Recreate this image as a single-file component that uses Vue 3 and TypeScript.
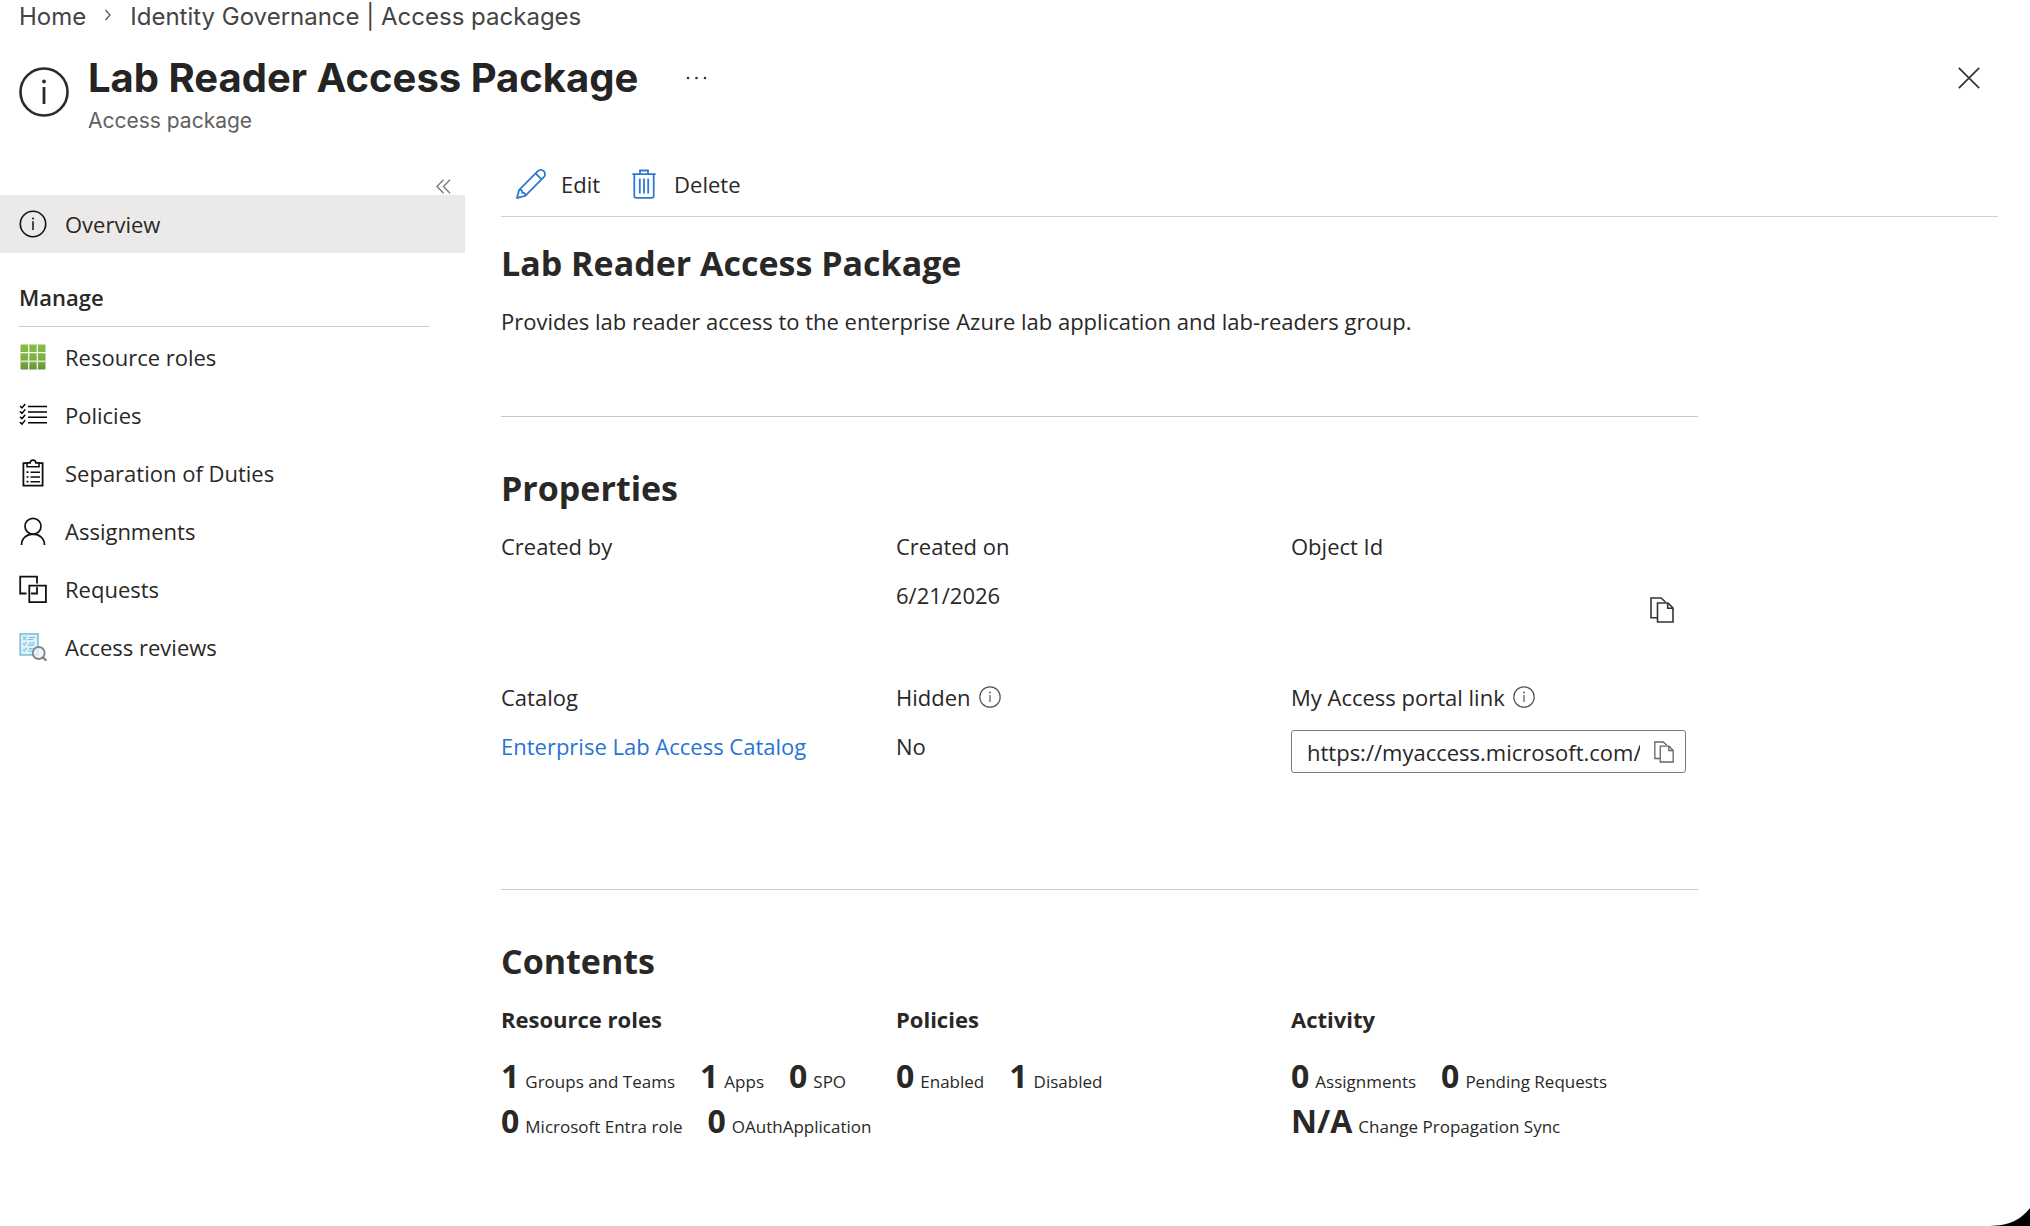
<script setup lang="ts">
interface NavItem {
  id: string
  label: string
}

interface Stat {
  value: string
  label: string
}

interface StatGroup {
  title: string
  stats: Stat[]
}

const packageName = 'Lab Reader Access Package'
const portalLink = 'https://myaccess.microsoft.com/'

const manageItems: NavItem[] = [
  { id: 'roles', label: 'Resource roles' },
  { id: 'policies', label: 'Policies' },
  { id: 'duties', label: 'Separation of Duties' },
  { id: 'assignments', label: 'Assignments' },
  { id: 'requests', label: 'Requests' },
  { id: 'reviews', label: 'Access reviews' },
]

const groups: StatGroup[] = [
  {
    title: 'Resource roles',
    stats: [
      { value: '1', label: 'Groups and Teams' },
      { value: '1', label: 'Apps' },
      { value: '0', label: 'SPO' },
      { value: '0', label: 'Microsoft Entra role' },
      { value: '0', label: 'OAuthApplication' },
    ],
  },
  {
    title: 'Policies',
    stats: [
      { value: '0', label: 'Enabled' },
      { value: '1', label: 'Disabled' },
    ],
  },
  {
    title: 'Activity',
    stats: [
      { value: '0', label: 'Assignments' },
      { value: '0', label: 'Pending Requests' },
      { value: 'N/A', label: 'Change Propagation Sync' },
    ],
  },
]

const copy = (text: string): void => {
  void navigator.clipboard?.writeText(text)
}
</script>

<template>
  <div class="page">
    <nav class="breadcrumb" aria-label="Breadcrumb">
      <a href="#home">Home</a>
      <svg class="crumb-sep" width="8" height="12" viewBox="0 0 8 12" aria-hidden="true">
        <path d="M1.5 1 6 6l-4.500 5" fill="none" stroke="#555" stroke-width="1.2" />
      </svg>
      <a href="#packages">Identity Governance | Access packages</a>
    </nav>

    <header class="header">
      <svg class="header-icon" width="50" height="50" viewBox="0 0 50 50" aria-hidden="true">
        <circle cx="25" cy="25" r="23.500" fill="none" stroke="#2b2b2b" stroke-width="2.600" />
        <path d="M25 20v17" stroke="#2b2b2b" stroke-width="2.800" />
        <circle cx="25" cy="14.500" r="1.900" fill="#2b2b2b" />
      </svg>
      <div class="header-text">
        <div class="title-row">
          <h1>{{ packageName }}</h1>
          <button type="button" class="more" aria-label="More actions">
            <svg width="22" height="4" viewBox="0 0 22 4" aria-hidden="true">
              <circle cx="2" cy="2" r="1.300" fill="#333" />
              <circle cx="10.500" cy="2" r="1.300" fill="#333" />
              <circle cx="19" cy="2" r="1.300" fill="#333" />
            </svg>
          </button>
        </div>
        <p class="subtitle">Access package</p>
      </div>
      <button type="button" class="close" aria-label="Close">
        <svg width="22" height="22" viewBox="0 0 22 22" aria-hidden="true">
          <path d="M.8.8l20.400 20.400M21.200.8.8 21.200" stroke="#333" stroke-width="1.700" />
        </svg>
      </button>
    </header>

    <div class="body">
      <aside class="sidebar">
        <button type="button" class="collapse" aria-label="Collapse menu">
          <svg width="15" height="15" viewBox="0 0 15 15" aria-hidden="true">
            <path d="M7.500.8 1 7.500l6.500 6.700M14 .8 7.500 7.500l6.500 6.700" fill="none" stroke="#777" stroke-width="1.300" />
          </svg>
        </button>
        <a class="nav-item selected" href="#overview" aria-current="page">
          <svg width="28" height="28" viewBox="0 0 28 28" aria-hidden="true">
            <circle cx="14" cy="14" r="12.700" fill="none" stroke="#111" stroke-width="1.600" />
            <path d="M14 11.300V20" stroke="#111" stroke-width="1.500" />
            <circle cx="14" cy="8.600" r="1" fill="#111" />
          </svg>
          Overview
        </a>
        <h2 class="nav-heading">Manage</h2>
        <a v-for="item in manageItems" :key="item.id" class="nav-item" :href="'#' + item.id">
          <svg width="28" height="28" viewBox="0 0 28 28" aria-hidden="true">
            <template v-if="item.id === 'roles'">
              <defs>
                <linearGradient id="green" x1="0" y1="0" x2="0" y2="1">
                  <stop offset="0" stop-color="#86bb46" />
                  <stop offset=".5" stop-color="#80b241" />
                  <stop offset="1" stop-color="#659438" />
                </linearGradient>
              </defs>
              <rect x="1.500" y="1.500" width="25" height="25" rx="1" fill="url(#green)" />
              <path d="M9.700 1.500v25M18.300 1.500v25M1.500 9.700h25" stroke="#fff" stroke-width="1.200" />
              <path d="M1.500 18.300h25" stroke="#d5e6c1" stroke-width="1.800" />
            </template>
            <template v-else-if="item.id === 'policies'">
              <path d="M9 5.600h19M9 11h19M9 16.300h19M9 21.700h19" stroke="#000" stroke-width="1.500" />
              <path
                d="M1 5l2 2 3.200-4M1 10.400l2 2 3.200-4M1 15.700l2 2 3.200-4M1 21.100l2 2 3.200-4"
                fill="none"
                stroke="#000"
                stroke-width="1.500"
              />
            </template>
            <template v-else-if="item.id === 'duties'">
              <path d="M8 4.200H4.400v22.500h19.200V4.200H20" fill="none" stroke="#111" stroke-width="1.800" />
              <path
                d="M8 3.900h3.200a2.800 2.800 0 0 1 5.600 0H20v3.800H8z"
                fill="#fff"
                stroke="#111"
                stroke-width="1.600"
              />
              <path d="M11.500 13.200h9.500M11.500 18h9.500M11.500 22.700h9.500" stroke="#111" stroke-width="1.500" />
              <path d="M7.500 13.200h2M7.500 18h2M7.500 22.700h2" stroke="#111" stroke-width="1.700" />
            </template>
            <template v-else-if="item.id === 'assignments'">
              <circle cx="14" cy="9.300" r="8" fill="none" stroke="#111" stroke-width="1.700" />
              <path d="M2.500 28c0-6.500 5-10.800 11.500-10.800S25.500 21.500 25.500 28" fill="none" stroke="#111" stroke-width="1.700" />
            </template>
            <template v-else-if="item.id === 'requests'">
              <path d="M7.500 18.500H1.200V1.700H18v6.800" fill="none" stroke="#111" stroke-width="1.800" />
              <path d="M10.300 10.700h16.600v16.500H10.300zM12 18.500h6V12" fill="none" stroke="#111" stroke-width="1.800" />
            </template>
            <template v-else>
              <rect x="1.200" y=".9" width="17.800" height="21" fill="#dcf1fa" stroke="#7dbfdd" stroke-width="1.600" />
              <path
                d="M10 4.500h6M9 6.500h5M10 10h6M9 12.200h6M10 15.700h4M9 18h4M4 3.700l3.200 3.200M7.200 3.700 4 6.900M4 10.700l1.300 1.300 2.200-2.900M4 16.500l1.300 1.300 2.200-2.900"
                fill="none"
                stroke="#7dbfdd"
                stroke-width="1.200"
              />
              <circle cx="19.700" cy="20" r="6" fill="#e9f5fb" fill-opacity=".8" stroke="#858585" stroke-width="1.800" />
              <path d="M23.800 24.200 27.300 27.700" stroke="#777" stroke-width="2" />
            </template>
          </svg>
          {{ item.label }}
        </a>
      </aside>

      <main class="main">
        <div class="toolbar">
          <button type="button" class="command">
            <svg width="30" height="30" viewBox="0 0 30 30" fill="none" stroke="#2f79d3" stroke-width="1.800" aria-hidden="true">
              <path d="M1 29l2.200-8.200L21.800 2.200a4.200 4.200 0 0 1 6 6L9.200 26.800z" stroke-linejoin="round" />
              <path d="M3.200 20.800c2.200-.2 3.300.8 3 2.900 2.100-.3 3.200.8 3 3.100M19.600 4.400l6 6M1 29l3.500-1" />
            </svg>
            Edit
          </button>
          <button type="button" class="command">
            <svg width="30" height="30" viewBox="-3 0 30 30" fill="none" stroke="#2f79d3" stroke-width="1.800" aria-hidden="true">
              <path d="M.3 5.200h23.400M8 5V1.500h8V5M2.300 5.500V27q0 1.800 1.800 1.800h15.800q1.800 0 1.800-1.800V5.500" />
              <path d="M7.800 9.500v15M12 9.500v15M16.200 9.500v15" />
            </svg>
            Delete
          </button>
        </div>

        <div class="content">
          <section class="section intro">
            <h2>{{ packageName }}</h2>
            <p>Provides lab reader access to the enterprise Azure lab application and lab-readers group.</p>
          </section>

          <section class="section properties">
            <h2>Properties</h2>
            <dl class="grid">
              <div>
                <dt>Created by</dt>
                <dd class="tall"></dd>
              </div>
              <div>
                <dt>Created on</dt>
                <dd class="tall">6/21/2026</dd>
              </div>
              <div>
                <dt>Object Id</dt>
                <dd class="tall copy-row">
                  <button type="button" class="copy" aria-label="Copy object id" @click="copy('')">
                    <svg width="24" height="26" viewBox="0 0 24 26" fill="none" stroke="#333" stroke-width="1.600" aria-hidden="true">
                      <path d="M7 20.800H1V1h10l4.500 4" />
                      <path d="M7.500 6H18l5 5v14H7.500zM17.700 6v5.200H23" />
                    </svg>
                  </button>
                </dd>
              </div>
              <div>
                <dt>Catalog</dt>
                <dd><a class="link" href="#catalog">Enterprise Lab Access Catalog</a></dd>
              </div>
              <div>
                <dt>
                  Hidden
                  <svg width="22" height="22" viewBox="0 0 22 22" aria-hidden="true">
                    <circle cx="11" cy="11" r="10.200" fill="none" stroke="#555" stroke-width="1.200" />
                    <path d="M11 9v7" stroke="#555" stroke-width="1.200" />
                    <circle cx="11" cy="6.500" r=".9" fill="#555" />
                  </svg>
                </dt>
                <dd>No</dd>
              </div>
              <div>
                <dt>
                  <label for="portal-link">My Access portal link</label>
                  <svg width="22" height="22" viewBox="0 0 22 22" aria-hidden="true">
                    <circle cx="11" cy="11" r="10.200" fill="none" stroke="#555" stroke-width="1.200" />
                    <path d="M11 9v7" stroke="#555" stroke-width="1.200" />
                    <circle cx="11" cy="6.500" r=".9" fill="#555" />
                  </svg>
                </dt>
                <dd class="field">
                  <input id="portal-link" type="text" readonly :value="portalLink" />
                  <button type="button" class="copy" aria-label="Copy portal link" @click="copy(portalLink)">
                    <svg width="20" height="22" viewBox="0 0 24 26" fill="none" stroke="#666" stroke-width="1.600" aria-hidden="true">
                      <path d="M7 20.800H1V1h10l4.500 4" />
                      <path d="M7.500 6H18l5 5v14H7.500zM17.700 6v5.200H23" />
                    </svg>
                  </button>
                </dd>
              </div>
            </dl>
          </section>

          <section class="section contents">
            <h2>Contents</h2>
            <div class="grid">
              <div v-for="group in groups" :key="group.title">
                <h3>{{ group.title }}</h3>
                <ul class="stats">
                  <li v-for="stat in group.stats" :key="stat.label">
                    <strong>{{ stat.value }}</strong>
                    <span>{{ stat.label }}</span>
                  </li>
                </ul>
              </div>
            </div>
          </section>
        </div>
      </main>
    </div>

    <svg class="corner" width="44" height="18" viewBox="0 0 44 18" aria-hidden="true">
      <path d="M0 18C20 18 33 14 44 0v18z" fill="#000" />
    </svg>
  </div>
</template>

<style>
body {
  margin: 0;
  background: #fff;
}
</style>

<style scoped>
.page {
  position: relative;
  box-sizing: border-box;
  min-height: 100vh;
  overflow: hidden;
  color: #292827;
  font-family: "Open Sans", "Noto Sans", sans-serif;
  font-size: 22px;
  line-height: 32px;
}

h1,
h2,
h3,
p,
dl,
dd,
ul {
  margin: 0;
  padding: 0;
}

button {
  display: flex;
  align-items: center;
  padding: 0;
  border: 0;
  background: none;
  color: inherit;
  font: inherit;
  cursor: pointer;
}

svg {
  display: block;
  flex: none;
}

a {
  color: inherit;
  text-decoration: none;
}

.breadcrumb {
  display: flex;
  align-items: center;
  gap: 18px;
  padding-left: 19px;
  color: #444;
  font-family: Inter, sans-serif;
  font-size: 24px;
  line-height: 34px;
}

.crumb-sep {
  margin-bottom: 4px;
}

.header {
  display: flex;
  align-items: flex-start;
  padding: 20px 50px 0 19px;
  font-family: Inter, sans-serif;
}

.header-icon {
  margin-top: 13px;
}

.header-text {
  flex: 1;
  margin-left: 19px;
}

.title-row {
  display: flex;
  align-items: center;
  gap: 48px;
}

h1 {
  color: #242424;
  font-size: 40px;
  font-weight: 700;
  line-height: 48px;
}

.subtitle {
  margin-top: 5px;
  color: #616161;
  font-size: 21px;
  line-height: 28px;
}

.close {
  margin-top: 13px;
}

.body {
  display: flex;
  margin-top: 17px;
}

.sidebar {
  flex: none;
  width: 465px;
}

.collapse {
  height: 15px;
  margin: 27px 14px 1px auto;
}

.nav-item {
  display: flex;
  align-items: center;
  gap: 18px;
  height: 58px;
  padding-left: 19px;
}

.nav-item.selected {
  background: #ebeae9;
}

.nav-heading {
  margin: 28px 36px 1px 19px;
  padding-bottom: 13px;
  border-bottom: 1px solid #c8c8c8;
  font-size: 22px;
  font-weight: 600;
  line-height: 32px;
}

.main {
  flex: 1;
  min-width: 0;
  padding: 0 32px 0 36px;
}

.toolbar {
  display: flex;
  align-items: center;
  gap: 29px;
  height: 64px;
  padding-left: 15px;
  border-bottom: 1px solid #d1d1d1;
}

.command {
  gap: 15px;
}

.content {
  max-width: 1197px;
}

.section h2 {
  margin-bottom: 20px;
  font-size: 34px;
  font-weight: 700;
  line-height: 44px;
}

.section + .section {
  padding-top: 49px;
  border-top: 1px solid #c8c8c8;
}

.intro {
  padding: 24px 0 79px;
}

.properties {
  padding-bottom: 116px;
}

.grid {
  display: grid;
  grid-template-columns: repeat(3, 1fr);
  row-gap: 41px;
  padding-right: 12px;
}

dt {
  display: flex;
  align-items: center;
  gap: 8px;
  margin-bottom: 17px;
}

.tall {
  height: 61px;
}

.copy-row {
  display: flex;
  align-items: center;
  justify-content: flex-end;
  padding-right: 12px;
}

.link {
  color: #2874d1;
}

.field {
  display: flex;
  align-items: center;
  box-sizing: border-box;
  height: 43px;
  padding: 0 11px 0 15px;
  gap: 14px;
  border: 1px solid #7a7a7a;
  border-radius: 3px;
}

.field input {
  flex: 1;
  min-width: 0;
  padding: 0;
  border: 0;
  outline: 0;
  background: none;
  color: inherit;
  font: inherit;
}

h3 {
  margin-bottom: 18px;
  font-size: 22px;
  font-weight: 700;
  line-height: 32px;
}

.stats {
  display: flex;
  flex-wrap: wrap;
  column-gap: 25px;
  list-style: none;
}

.stats li {
  display: flex;
  align-items: baseline;
  gap: 6px;
  white-space: nowrap;
}

.stats strong {
  font-size: 32px;
  line-height: 45px;
}

.stats span {
  font-size: 17px;
  line-height: 24px;
}

.corner {
  position: absolute;
  right: 0;
  bottom: 0;
}
</style>
